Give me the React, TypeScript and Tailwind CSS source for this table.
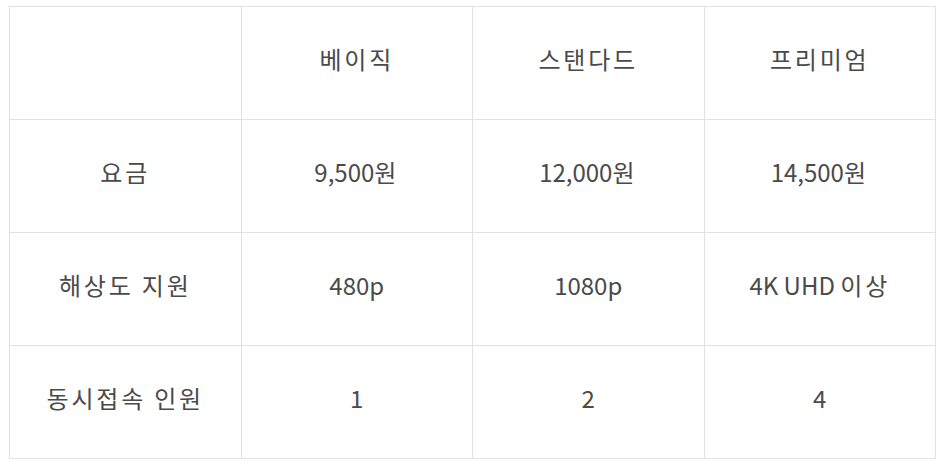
import React from "react";

const rows: string[][] = [
  ["", "베이직", "스탠다드", "프리미엄"],
  ["요금", "9,500원", "12,000원", "14,500원"],
  ["해상도 지원", "480p", "1080p", "4K UHD 이상"],
  ["동시접속 인원", "1", "2", "4"],
];

function Cell({ text }: { text: string }) {
  const parts = text.split(/([가-힣]+(?: [가-힣]+)*)/);
  return (
    <>
      {parts.map((p, k) =>
        /[가-힣]/.test(p) ? (
          <span key={k} className="tracking-[2.8px]">
            {p}
          </span>
        ) : (
          <span key={k}>{p}</span>
        )
      )}
    </>
  );
}

export default function App() {
  return (
    <div className="w-[945px] h-[469px] bg-white pt-[6px] pl-[9px]" style={{ fontFamily: '"Noto Sans CJK KR", "Noto Sans", sans-serif' }}>
      <table className="border-collapse table-fixed w-[927px] text-[#4a4a4a] text-[24px]">
        <tbody>
          {rows.map((r, i) => (
            <tr key={i}>
              {r.map((c, j) => (
                <td key={j} className="border border-[#e2e2e2] h-[113px] text-center align-middle p-0 pb-[8px]">
                  <Cell text={c} />
                </td>
              ))}
            </tr>
          ))}
        </tbody>
      </table>
    </div>
  );
}
